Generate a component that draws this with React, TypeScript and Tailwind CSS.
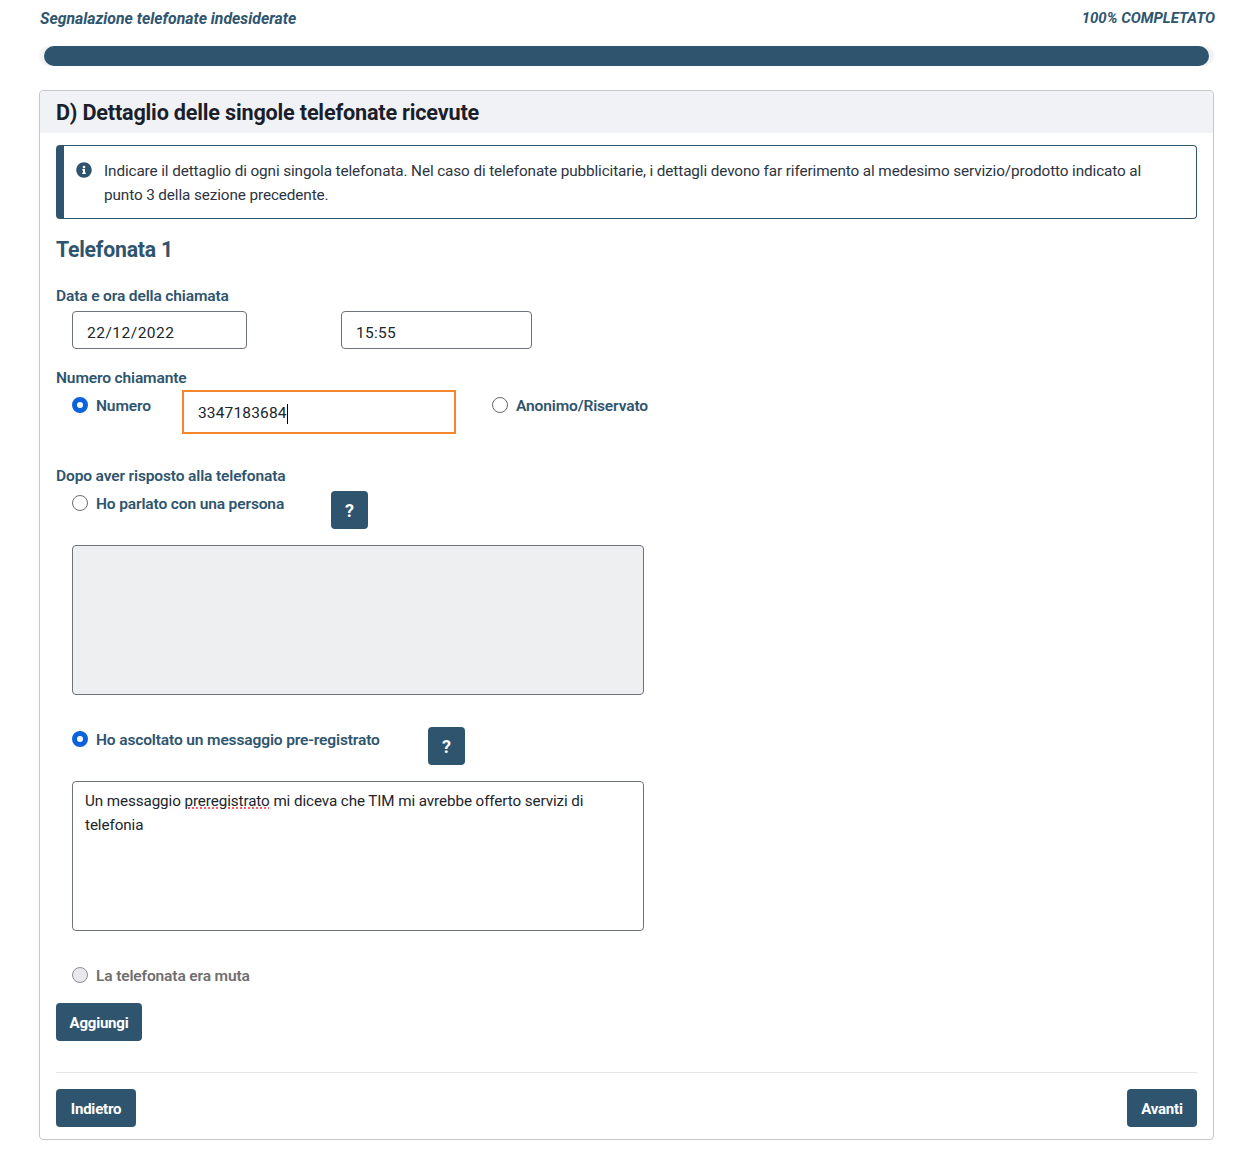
const font = { fontFamily: "Roboto, 'Noto Sans', sans-serif" }

function Radio({ checked = false, disabled = false }: { checked?: boolean; disabled?: boolean }) {
  if (checked) {
    return <span className="block w-4 h-4 rounded-full border-[5px] border-[#0b63dc] bg-white" />
  }
  return (
    <span
      className={
        disabled
          ? 'block w-4 h-4 rounded-full border border-[#8f8f8f] bg-[#e9e9ed]'
          : 'block w-4 h-4 rounded-full border border-[#6b6b6b] bg-white'
      }
    />
  )
}

function RadioLabel({
  label,
  checked,
  disabled,
  className = ''
}: {
  label: string
  checked?: boolean
  disabled?: boolean
  className?: string
}) {
  return (
    <div className={`flex items-center h-6 gap-2 ${className}`}>
      <Radio checked={checked} disabled={disabled} />
      <span
        className={`mt-[4px] text-[15.55px] font-semibold tracking-[-0.15px] ${
          disabled ? 'text-[#6f6f6f]' : 'text-[#2f556e]'
        }`}
      >
        {label}
      </span>
    </div>
  )
}

function Button({ children, className = '' }: { children: React.ReactNode; className?: string }) {
  return (
    <button className={`h-[38px] pt-[2px] rounded bg-[#2f556e] text-white text-[15px] font-bold tracking-[-0.2px] ${className}`}>
      {children}
    </button>
  )
}

function HelpButton() {
  return (
    <button className="w-[37px] h-[38px] pt-px rounded bg-[#2f556e] text-white text-[18px] font-bold">?</button>
  )
}

function Field({ value, className = '' }: { value: string; className?: string }) {
  return (
    <div
      className={`h-[38px] flex items-center px-[14px] pt-2 border border-[#6e7379] rounded text-[15.5px] text-[#20252b] bg-white ${className}`}
    >
      {value}
    </div>
  )
}

export default function App() {
  return (
    <div style={font} className="w-[1236px] h-[1157px] bg-white overflow-hidden pl-[39px]">
      <div className="w-[1176px] h-[37px] pl-px flex items-center justify-between italic font-bold text-[#2f556e]">
        <span className="text-[15.8px]">Segnalazione telefonate indesiderate</span>
        <span className="text-[15px]">100% COMPLETATO</span>
      </div>

      {/* Progress bar */}
      <div className="w-[1175px] h-5 mt-[9px] px-[5px] rounded-full bg-[#f2f3f6]">
        <div className="h-5 rounded-full bg-[#2f556e]" />
      </div>

      {/* Card */}
      <div className="w-[1175px] h-[1050px] mt-6 border border-[#c5c7cb] rounded">
        <div className="h-[42px] flex items-center px-4 pt-px bg-[#f1f2f6] rounded-t">
          <h1 className="text-[21.65px] leading-none font-bold tracking-[-0.2px] text-[#1b1f2b]">
            D) Dettaglio delle singole telefonate ricevute
          </h1>
        </div>

        <div className="px-4">
          {/* Info alert */}
          <div className="h-[74px] mt-3 flex border border-[#2f556e] border-l-[8px] rounded pl-3 pr-8 pt-[13px]">
            <svg viewBox="0 0 512 512" className="w-4 h-4 mt-[3px] shrink-0 fill-[#2f556e]">
              <path d="M256 8C119 8 8 119 8 256s111 248 248 248 248-111 248-248S393 8 256 8zm0 110c23 0 42 19 42 42s-19 42-42 42-42-19-42-42 19-42 42-42zm56 254c0 7-5 12-12 12h-88c-7 0-12-5-12-12v-24c0-7 5-12 12-12h12v-64h-12c-7 0-12-5-12-12v-24c0-7 5-12 12-12h64c7 0 12 5 12 12v100h12c7 0 12 5 12 12v24z" />
            </svg>
            <p className="ml-3 text-[15.3px] leading-6 tracking-[-0.11px] text-[#2c3440]">
              Indicare il dettaglio di ogni singola telefonata. Nel caso di telefonate pubblicitarie, i dettagli devono far riferimento al medesimo servizio/prodotto indicato al punto 3 della sezione precedente.
            </p>
          </div>

          <h2 className="mt-[18px] h-[25px] leading-[26px] text-[21.2px] font-bold tracking-[-0.2px] text-[#2f556e]">
            Telefonata 1
          </h2>

          <div className="mt-[23px] h-6 leading-[22px] text-[15.55px] font-semibold tracking-[-0.15px] text-[#2f556e]">
            Data e ora della chiamata
          </div>
          <div className="mt-[2px] ml-4 flex gap-[94px]">
            <Field value="22/12/2022" className="w-[175px] tracking-[0.5px]" />
            <Field value="15:55" className="w-[191px] tracking-[0.3px]" />
          </div>

          <div className="mt-[18px] h-[23px] leading-[22px] text-[15.55px] font-semibold tracking-[-0.15px] text-[#2f556e]">
            Numero chiamante
          </div>
          <div className="ml-4 flex items-start">
            <RadioLabel label="Numero" checked className="w-[110px] mt-[3px]" />
            <div className="w-[274px] h-11 flex items-center px-[14px] pt-1 border-2 border-[#f5862b] text-[15.5px] text-[#20252b]">
              <span className="tracking-[0.15px]">3347183684</span>
              <span className="w-px h-5 bg-black" />
            </div>
            <RadioLabel label="Anonimo/Riservato" className="ml-9 mt-[3px]" />
          </div>

          <div className="mt-[31px] h-6 leading-[22px] text-[15.55px] font-semibold tracking-[-0.15px] text-[#2f556e]">
            Dopo aver risposto alla telefonata
          </div>
          <div className="mt-[2px] ml-4 flex items-start">
            <RadioLabel label="Ho parlato con una persona" className="w-[259px]" />
            <HelpButton />
          </div>
          <div className="ml-4 mt-4 w-[572px] h-[150px] border border-[#6e7379] rounded bg-[#eeeff1]" />

          <div className="ml-4 mt-8 flex items-start">
            <RadioLabel label="Ho ascoltato un messaggio pre-registrato" checked className="w-[356px]" />
            <HelpButton />
          </div>
          <div className="ml-4 mt-4 w-[572px] h-[150px] border border-[#6e7379] rounded px-3 py-[7px] text-[15.2px] leading-6 tracking-[-0.08px] text-[#20252b]">
            Un messaggio{' '}
            <span className="underline decoration-dotted decoration-red-500 underline-offset-2">preregistrato</span>{' '}
            mi diceva che TIM mi avrebbe offerto servizi di
            <br />
            telefonia
          </div>

          <RadioLabel label="La telefonata era muta" disabled className="ml-4 mt-8" />

          <Button className="w-[86px] mt-4 block">Aggiungi</Button>

          <div className="mt-[31px] pt-4 border-t border-[#e3e4e6] flex justify-between">
            <Button className="w-20">Indietro</Button>
            <Button className="w-[70px]">Avanti</Button>
          </div>
        </div>
      </div>
    </div>
  )
}
